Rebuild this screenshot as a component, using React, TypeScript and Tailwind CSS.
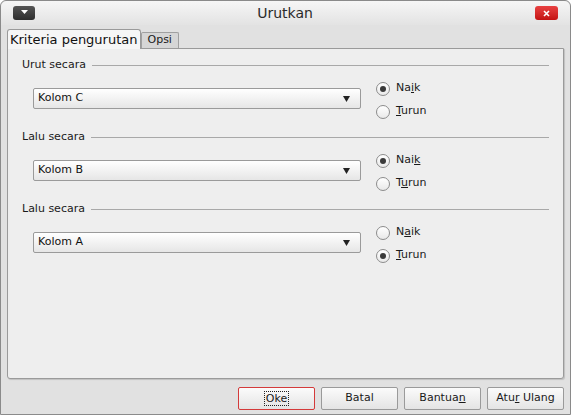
import React from 'react';

const font = { fontFamily: '"DejaVu Sans", Verdana, sans-serif' };

function Radio({ checked, children }: { checked?: boolean; children: React.ReactNode }) {
  return (
    <div className="flex h-[23px] items-center gap-[6px]">
      <span className="flex h-[14px] w-[14px] items-center justify-center rounded-full border border-[#8c8c8c] bg-gradient-to-b from-[#ffffff] to-[#e9e9e9]">
        {checked && <span className="h-[6px] w-[6px] rounded-full bg-[#3a3a3a]" />}
      </span>
      <span className="text-[11px] text-[#1a1a1a]">{children}</span>
    </div>
  );
}

function Group({
  label,
  value,
  first,
  naik,
  turun,
}: {
  label: string;
  value: string;
  first: boolean;
  naik: React.ReactNode;
  turun: React.ReactNode;
}) {
  return (
    <div className="h-[72px]">
      {/* group header with rule */}
      <div className="flex h-[14px] items-center gap-[6px]">
        <span className="text-[11px] text-[#1a1a1a]">{label}</span>
        <span className="h-px flex-1 bg-[#a8a8a8]" />
      </div>
      <div className="mt-[5px] flex items-start pl-[11px]">
        <div className="mt-[11px] flex h-[21px] w-[328px] items-center justify-between rounded-[2px] border border-[#9a9a9a] bg-gradient-to-b from-[#ffffff] to-[#e6e6e6] pl-[4px] pr-[10px]">
          <span className="text-[11px] text-[#111]">{value}</span>
          <svg width="7" height="6" viewBox="0 0 7 6">
            <path d="M0 0h7L3.5 6z" fill="#222" />
          </svg>
        </div>
        <div className="ml-[15px] flex flex-col">
          <Radio checked={first}>{naik}</Radio>
          <Radio checked={!first}>{turun}</Radio>
        </div>
      </div>
    </div>
  );
}

function Button({ children, focus }: { children: React.ReactNode; focus?: boolean }) {
  return (
    <div
      className={`flex h-[23px] w-[77px] items-center justify-center rounded-[2px] border bg-gradient-to-b from-[#fbfbfb] to-[#e4e4e4] text-[11px] text-[#1a1a1a] ${
        focus ? 'border-[#d43a3a]' : 'border-[#9a9a9a]'
      }`}
    >
      {focus ? (
        <span className="border border-dotted border-[#222] px-px leading-[13px]">{children}</span>
      ) : (
        <span>{children}</span>
      )}
    </div>
  );
}

export default function App() {
  return (
    <div style={font} className="h-[415px] w-[571px] overflow-hidden bg-white">
      <div className="flex h-full w-full flex-col rounded-t-[6px] border border-[#8a8a8a] bg-[#e1e1e1]">
        {/* Title bar */}
        <div className="flex h-[24px] items-center rounded-t-[6px] bg-gradient-to-b from-[#f6f6f6] to-[#e3e3e3] px-[12px]">
          <div className="flex h-[14px] w-[22px] items-start justify-center rounded-[3px] bg-gradient-to-b from-[#555] to-[#2e2e2e] pt-[4px]">
            <svg width="7" height="4" viewBox="0 0 7 4">
              <path d="M0 0h7L3.5 4z" fill="#fff" />
            </svg>
          </div>
          <div className="flex-1 text-center text-[14px] text-[#2a2a2a]">Urutkan</div>
          <div className="flex h-[14px] w-[23px] items-center justify-center rounded-[3px] bg-gradient-to-b from-[#e84040] to-[#c41010]">
            <svg width="7" height="7" viewBox="0 0 7 7">
              <path d="M1 1l5 5M6 1L1 6" stroke="#fff" strokeWidth="1.6" />
            </svg>
          </div>
        </div>

        {/* Tabs */}
        <div className="mt-[4px] flex items-end px-[6px]">
          <div className="z-10 -mb-px flex h-[20px] items-center rounded-t-[3px] border border-b-0 border-[#9a9a9a] bg-[#f6f6f6] px-[2px] text-[13px] text-[#111]">
            Kriteria pengurutan
          </div>
          <div className="flex h-[16px] items-center rounded-t-[2px] border border-b-0 border-[#a0a0a0] bg-[#d6d6d6] px-[6px] text-[11px] text-[#1a1a1a]">
            Opsi
          </div>
        </div>

        {/* Panel */}
        <div className="mx-[6px] flex h-[331px] flex-col rounded-b-[3px] border border-[#9a9a9a] bg-[#eeeeee] px-[14px] pt-[9px] shadow-[1px_1px_1px_rgba(0,0,0,0.15)]">
          <Group
            label="Urut secara"
            value="Kolom C"
            first
            naik={<>Na<u>i</u>k</>}
            turun={<><u>T</u>urun</>}
          />
          <Group
            label="Lalu secara"
            value="Kolom B"
            first
            naik={<>Nai<u>k</u></>}
            turun={<>T<u>u</u>run</>}
          />
          <Group
            label="Lalu secara"
            value="Kolom A"
            first={false}
            naik={<>N<u>a</u>ik</>}
            turun={<><u>T</u>urun</>}
          />
        </div>

        {/* Buttons */}
        <div className="flex justify-end gap-[6px] pr-[6px] pt-[8px]">
          <Button focus>Oke</Button>
          <Button>Batal</Button>
          <Button>
            Bantua<u>n</u>
          </Button>
          <Button>
            Atu<u>r</u>{' '}Ulang
          </Button>
        </div>
      </div>
    </div>
  );
}
